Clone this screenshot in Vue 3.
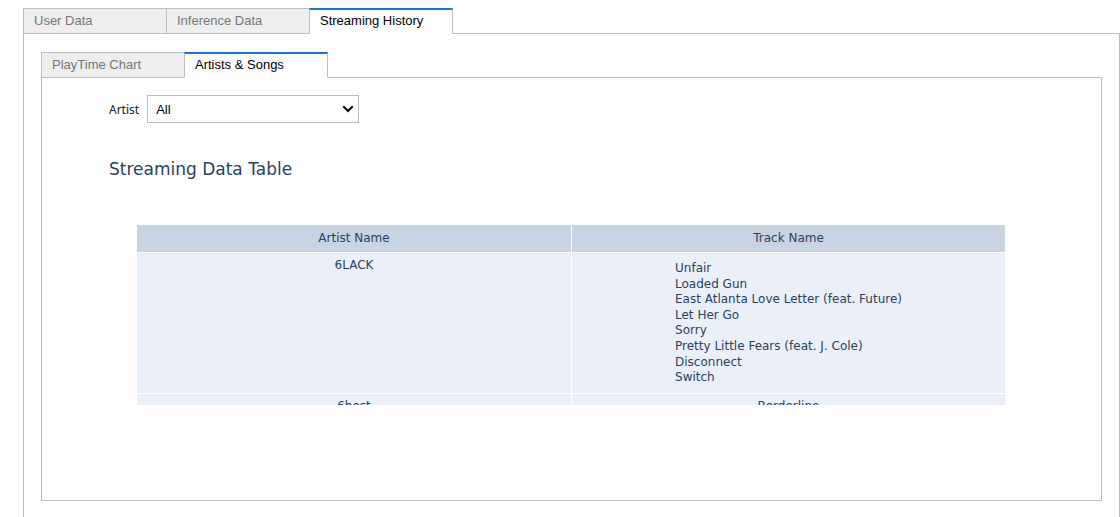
<script setup>
import { ref } from 'vue'

const tabs = ['User Data', 'Inference Data', 'Streaming History']
const subTabs = ['PlayTime Chart', 'Artists & Songs']
const activeTab = ref(2)
const activeSubTab = ref(1)
const artist = ref('All')

const rows = [
  {
    artist: '6LACK',
    tracks: [
      'Unfair',
      'Loaded Gun',
      'East Atlanta Love Letter (feat. Future)',
      'Let Her Go',
      'Sorry',
      'Pretty Little Fears (feat. J. Cole)',
      'Disconnect',
      'Switch',
    ],
  },
  { artist: '6host', tracks: ['Borderline'] },
]
</script>

<template>
  <main class="page">
    <div class="tab-bar" role="tablist" aria-label="Sections">
      <button
        v-for="(tab, i) in tabs"
        :key="tab"
        type="button"
        role="tab"
        class="tab"
        :class="{ active: i === activeTab }"
        :aria-selected="i === activeTab"
        @click="activeTab = i"
      >{{ tab }}</button>
    </div>
    <section class="panel outer">
      <div class="tab-bar" role="tablist" aria-label="Streaming history views">
        <button
          v-for="(tab, i) in subTabs"
          :key="tab"
          type="button"
          role="tab"
          class="tab"
          :class="{ active: i === activeSubTab }"
          :aria-selected="i === activeSubTab"
          @click="activeSubTab = i"
        >{{ tab }}</button>
      </div>
      <section class="panel inner">
        <div class="filter">
          <label for="artist">Artist</label>
          <div class="select-box">
            <select id="artist" v-model="artist">
              <option>All</option>
              <option v-for="row in rows" :key="row.artist">{{ row.artist }}</option>
            </select>
            <svg class="chevron" width="12" height="8" viewBox="0 0 12 8" aria-hidden="true">
              <path d="M1.3 1.3 L6 6 L10.7 1.3" fill="none" stroke="#000" stroke-width="2" />
            </svg>
          </div>
        </div>
        <h2>Streaming Data Table</h2>
        <div class="table-view">
          <table>
            <thead>
              <tr><th scope="col">Artist Name</th><th scope="col">Track Name</th></tr>
            </thead>
            <tbody>
              <tr v-for="row in rows" :key="row.artist">
                <td>{{ row.artist }}</td>
                <td :class="{ multi: row.tracks.length > 1 }">
                  <div class="tracks">
                    <div v-for="track in row.tracks" :key="track">{{ track }}</div>
                  </div>
                </td>
              </tr>
            </tbody>
          </table>
        </div>
      </section>
    </section>
  </main>
</template>

<style>
body {
  margin: 0;
  background: #fff;
}
</style>

<style scoped>
.page {
  box-sizing: border-box;
  display: flex;
  flex-direction: column;
  min-height: 100vh;
  padding: 8px 0 0 23px;
  font-family: "Liberation Sans", Arial, sans-serif;
  font-size: 13px;
}
.tab-bar {
  display: flex;
}
.tab {
  box-sizing: border-box;
  display: flex;
  width: 144px;
  height: 26px;
  margin: 0 -1px -1px 0;
  padding: 0 10px;
  border: 1px solid #bdbdbd;
  background: #eee;
  color: #757575;
  font: inherit;
  line-height: 24px;
  text-align: left;
  white-space: nowrap;
  align-items: flex-start;
  cursor: pointer;
}
.tab.active {
  position: relative;
  border-top: 2px solid #1976d2;
  border-bottom-color: #fff;
  background: #fff;
  color: #000;
  line-height: 22px;
}
.panel {
  border: 1px solid #bdbdbd;
}
.outer {
  flex: 1;
  padding: 18px 17px 16px;
  border-bottom: 0;
}
.inner {
  padding: 17px 96px 95px 67px;
}
.filter {
  display: flex;
  align-items: center;
  gap: 8px;
}
label {
  font-family: "Noto Sans", sans-serif;
  font-size: 12px;
  color: #212121;
}
.select-box {
  position: relative;
}
.chevron {
  position: absolute;
  right: 5px;
  top: 10px;
  pointer-events: none;
}
select {
  appearance: none;
  display: block;
  box-sizing: border-box;
  width: 212px;
  height: 28px;
  padding: 0 20px 0 8px;
  border: 1px solid #bdbdbd;
  border-radius: 0;
  background: #fff;
  color: #000;
  font: inherit;
}
h2 {
  margin: 36px 0 46px;
  font: 400 17px/20px "DejaVu Sans", Verdana, sans-serif;
  color: #2a3f5f;
}
.table-view {
  height: 180px;
  margin-left: 28px;
  overflow: hidden;
}
table {
  width: 100%;
  table-layout: fixed;
  border-collapse: separate;
  border-spacing: 0;
  font: 12px/16px "DejaVu Sans", Verdana, sans-serif;
  color: #2a3f5f;
  text-align: center;
}
th,
td {
  border-bottom: 1px solid #fff;
  vertical-align: top;
  font-weight: 400;
}
th + th,
td + td {
  border-left: 1px solid #fff;
}
th {
  padding: 5px 0 6px;
  background: #c8d4e3;
}
td {
  padding: 4px 0 7px;
  background: #ebf0f8;
}
.multi {
  padding: 8px 0 7px;
}
.tracks {
  display: inline-block;
  text-align: left;
  vertical-align: top;
}
.multi .tracks {
  line-height: 1.3;
}
</style>
